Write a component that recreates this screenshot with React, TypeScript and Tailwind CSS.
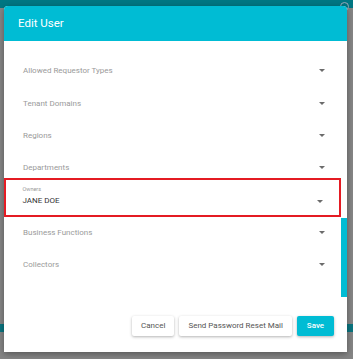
const fields = [
  "Allowed Requestor Types",
  "Tenant Domains",
  "Regions",
  "Departments",
];
const fieldsAfter = ["Business Functions", "Collectors"];

function Caret() {
  return (
    <svg viewBox="0 0 10 5" className="w-[6px] h-[3px] fill-[#6b6b6b]">
      <path d="M0 0h10L5 5z" />
    </svg>
  );
}

function SelectRow({ label, top }: { label: string; top?: boolean }) {
  return (
    <div
      className={`h-[32.25px] flex pl-[19px] pr-[22px] ${
        top ? "items-end pb-[6px]" : "items-center pb-[2px]"
      }`}
    >
      <div className="flex-1 flex items-center justify-between">
        <span className="text-[8px] leading-[9px] text-[#9a9a9a]">{label}</span>
        <Caret />
      </div>
    </div>
  );
}

export default function App() {
  return (
    <div
      className="relative w-[353px] h-[359px] overflow-hidden bg-[#858585]"
      style={{ fontFamily: "Roboto, 'Liberation Sans', sans-serif" }}
    >
      {/* page behind the overlay */}
      <div className="h-[8px] bg-[#007682]" />
      <div className="absolute right-[4px] top-[2px] w-[9px] h-[9px] rounded-full border border-[#9ab]" />
      <div className="absolute left-0 top-[324px] w-full h-[8px] bg-[#0b7580]" />

      {/* dialog */}
      <div className="absolute left-[4px] top-[6px] w-[343px] h-[346px] bg-white rounded-t-[4px] shadow-[0_2px_6px_rgba(0,0,0,0.35)] flex flex-col">
        <div className="h-[35px] bg-[#00bcd4] rounded-t-[4px] flex items-center pl-[14px]">
          <span className="text-[11.5px] text-white">Edit User</span>
        </div>
        <div className="relative flex-1 pt-[8px]">
          {fields.map((f) => (
            <SelectRow key={f} label={f} top />
          ))}
          <div className="mr-[6px] h-[39px] border-[2.5px] border-[#e41b23] flex items-end justify-between pl-[16.5px] pr-[16px] pb-[10px]">
            <div className="flex flex-col">
              <span className="text-[5.5px] text-[#9a9a9a] leading-none mb-[5px]">Owners</span>
              <span className="text-[8px] text-[#333] leading-none">JANE DOE</span>
            </div>
            <div className="mb-[2px]">
              <Caret />
            </div>
          </div>
          {fieldsAfter.map((f) => (
            <SelectRow key={f} label={f} />
          ))}
          <div className="absolute right-0 top-[177px] w-[6px] h-[79px] bg-[#00bcd4]" />
          <div className="absolute right-[13px] bottom-[16px] flex gap-[5px] text-[8px]">
            <button className="h-[20px] px-[9px] rounded-[2px] bg-white text-[#555] shadow-[0_1px_3px_rgba(0,0,0,0.3)]">
              Cancel
            </button>
            <button className="h-[20px] px-[9px] rounded-[2px] bg-white text-[#555] shadow-[0_1px_3px_rgba(0,0,0,0.3)]">
              Send Password Reset Mail
            </button>
            <button className="h-[20px] w-[37px] rounded-[2px] bg-[#00bcd4] text-white font-medium shadow-[0_1px_3px_rgba(0,0,0,0.3)]">
              Save
            </button>
          </div>
        </div>
      </div>
    </div>
  );
}
